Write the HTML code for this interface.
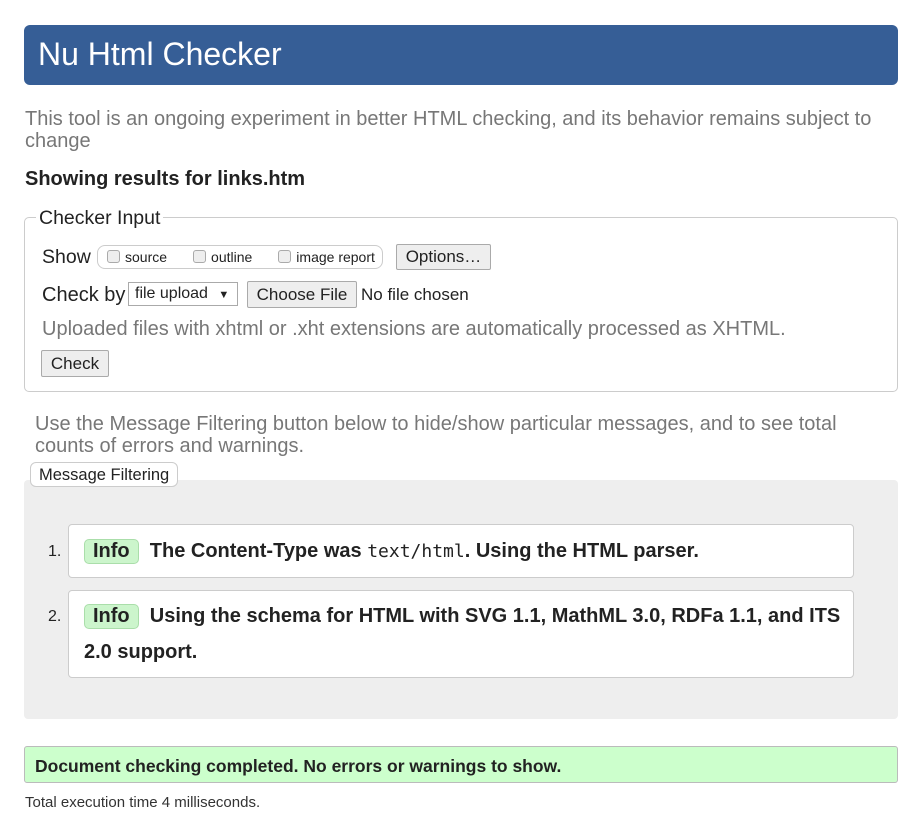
<!DOCTYPE html>
<html><head><meta charset="utf-8"><style>
*{box-sizing:border-box;margin:0;padding:0}
body{width:907px;height:817px;background:#fff;font-family:"Liberation Sans",Arial,sans-serif;color:#222;position:relative;overflow:hidden}
.a{position:absolute;white-space:nowrap}
.hdr{left:24px;top:25px;width:874px;height:60px;background:#365e96;border-radius:6px;color:#fff;font-size:32px;padding:11px 0 0 14px}
.gray{color:#777;font-size:20px}
.fs{left:24px;top:217px;width:874px;height:175px;border:1px solid #ccc;border-radius:5px}
.btn{background:#eee;border:1px solid #aaa;border-radius:2px;font-size:17px;color:#222;text-align:center}
.cb{display:inline-block;width:13px;height:13px;border:1px solid #aaa;border-radius:3px;background:#eee;vertical-align:-1px;margin-right:5px}
.box{left:68px;width:786px;background:#fff;border:1px solid #ccc;border-radius:4px}
.info{display:inline-block;background:#ccf5cc;border:1px solid #aadeaa;border-radius:5px;padding:0 8px;height:25px;line-height:23px}
.msg{font-weight:bold;font-size:20px}
</style></head><body>
<div class="a hdr">Nu Html Checker</div>
<div class="a gray" style="left:25px;top:108px">This tool is an ongoing experiment in better HTML checking, and its behavior remains subject to</div>
<div class="a gray" style="left:25px;top:130px">change</div>
<div class="a" style="left:25px;top:168px;font-size:20px;font-weight:bold">Showing results for links.htm</div>
<div class="a fs"></div>
<div class="a" style="left:36px;top:207px;background:#fff;padding:0 3px;font-size:19.5px;color:#222">Checker Input</div>
<div class="a" style="left:42px;top:246px;font-size:19.5px">Show</div>
<div class="a" style="left:97px;top:245px;width:286px;height:24px;border:1px solid #ccc;border-radius:8px;font-size:14px;padding:3px 0 0 9px"><span class="cb"></span>source<span style="display:inline-block;width:26px"></span><span class="cb"></span>outline<span style="display:inline-block;width:26px"></span><span class="cb"></span>image report</div>
<div class="a btn" style="left:396px;top:244px;width:95px;height:26px;line-height:24px">Options…</div>
<div class="a" style="left:42px;top:284px;font-size:20px">Check by</div>
<div class="a" style="left:128px;top:282px;width:110px;height:24px;border:1px solid #aaa;font-size:16px;padding:2px 0 0 6px;background:#fff">file upload <span style="font-size:11px;margin-left:6px">▼</span></div>
<div class="a btn" style="left:247px;top:281px;width:110px;height:27px;line-height:25px">Choose File</div>
<div class="a" style="left:361px;top:285px;font-size:17px">No file chosen</div>
<div class="a gray" style="left:42px;top:318px">Uploaded files with xhtml or .xht extensions are automatically processed as XHTML.</div>
<div class="a btn" style="left:41px;top:350px;width:68px;height:27px;line-height:25px">Check</div>
<div class="a gray" style="left:35px;top:413px">Use the Message Filtering button below to hide/show particular messages, and to see total</div>
<div class="a gray" style="left:35px;top:435px">counts of errors and warnings.</div>
<div class="a" style="left:24px;top:480px;width:874px;height:239px;background:#eee;border-radius:4px"></div>
<div class="a" style="left:30px;top:462px;width:148px;height:25px;background:#fff;border:1px solid #ccc;border-radius:6px;font-size:16.5px;padding:3px 0 0 8px">Message Filtering</div>
<div class="a" style="left:48px;top:543px;font-size:16px">1.</div>
<div class="a box" style="top:524px;height:54px"></div>
<div class="a msg" style="left:84px;top:539px"><span class="info">Info</span>&nbsp; The Content-Type was <span style="font-family:'DejaVu Sans Mono',monospace;font-weight:normal;font-size:18px">text/html</span>. Using the HTML parser.</div>
<div class="a" style="left:48px;top:608px;font-size:16px">2.</div>
<div class="a box" style="top:590px;height:88px"></div>
<div class="a msg" style="left:84px;top:604px"><span class="info">Info</span>&nbsp; Using the schema for HTML with SVG 1.1, MathML 3.0, RDFa 1.1, and ITS</div>
<div class="a msg" style="left:84px;top:641px">2.0 support.</div>
<div class="a" style="left:24px;top:746px;width:874px;height:37px;background:#ccffcc;border:1px solid #bbb;border-radius:3px;font-size:17.5px;font-weight:bold;padding:9px 0 0 10px">Document checking completed. No errors or warnings to show.</div>
<div class="a" style="left:25px;top:794px;font-size:15px;color:#333">Total execution time 4 milliseconds.</div>
</body></html>
